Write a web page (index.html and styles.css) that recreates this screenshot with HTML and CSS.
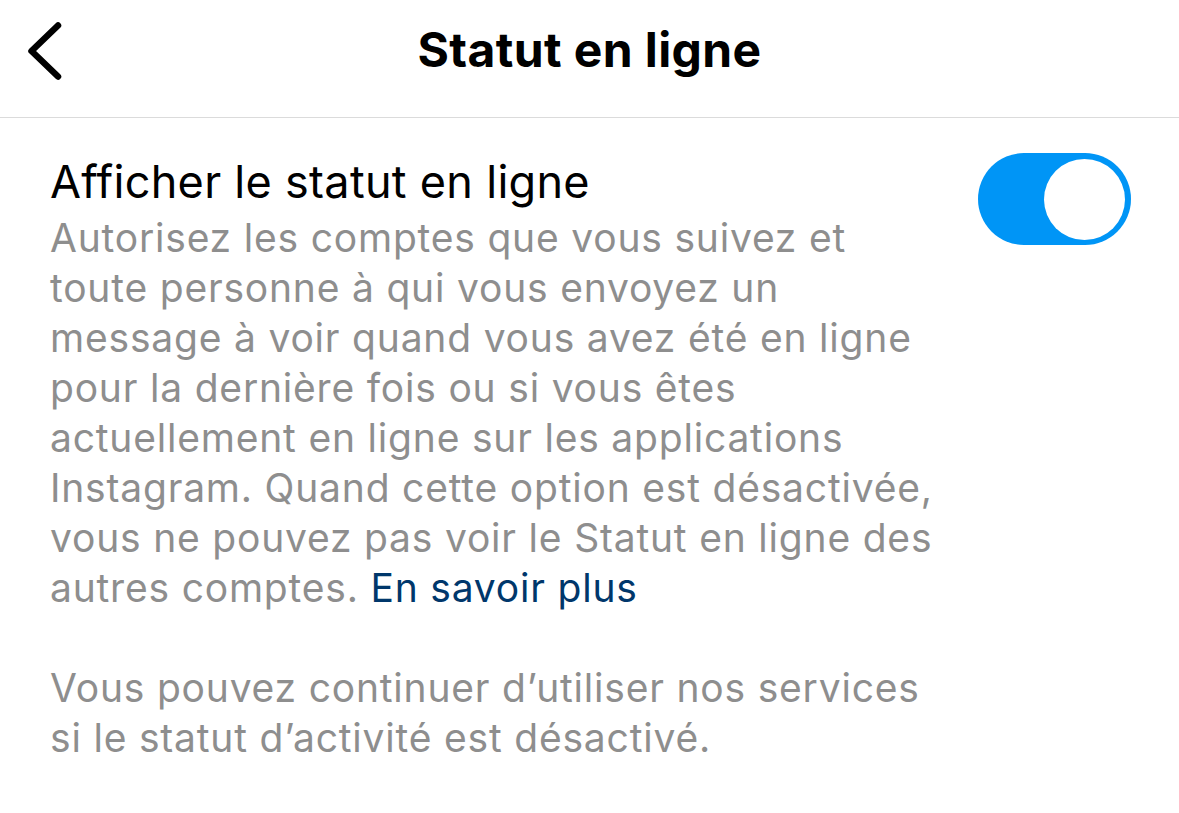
FILE: index.html
```html
<!DOCTYPE html>
<html lang="fr">
  <head>
    <meta charset="UTF-8" />
    <meta name="viewport" content="width=device-width, initial-scale=1.0" />
    <title>Statut en ligne</title>
    <link rel="stylesheet" href="styles.css">
  </head>
  <body>
    <header class="topbar">
      <button class="back" aria-label="Retour">
        <svg width="44" height="64" viewBox="0 0 44 64">
          <path d="M34 5.5 L7.5 31 L34 56.5" fill="none" stroke="#000" stroke-width="6.5" stroke-linecap="round" stroke-linejoin="round" />
        </svg>
      </button>
      <h1 class="title">Statut en ligne</h1>
    </header>

    <main class="content">
      <div class="setting">
        <div class="setting-text">
          <div class="setting-label">Afficher le statut en ligne</div>
          <p class="desc">
            Autorisez les comptes que vous suivez et<br>
            toute personne à qui vous envoyez un<br>
            message à voir quand vous avez été en ligne<br>
            pour la dernière fois ou si vous êtes<br>
            actuellement en ligne sur les applications<br>
            Instagram. Quand cette option est désactivée,<br>
            vous ne pouvez pas voir le Statut en ligne des<br>
            autres comptes. <a href="#" class="more">En savoir plus</a>
          </p>
        </div>
        <div class="toggle on"><span class="knob"></span></div>
      </div>

      <p class="desc note">
        Vous pouvez continuer d’utiliser nos services<br>
        si le statut d’activité est désactivé.
      </p>
    </main>
  </body>
</html>
```

FILE: styles.css
```css
body {
  margin: 0;
  padding: 0;
  background-color: #fff;
  font-family: "Inter", "Roboto", sans-serif;
  color: #000;
}

.topbar {
  height: 97px;
  padding-top: 20px;
  border-bottom: 1px solid #dbdbdb;
  display: flex;
  justify-content: center;
  align-items: flex-start;
  position: relative;
}

.back {
  position: absolute;
  left: 24px;
  top: 20px;
  background: none;
  border: none;
  padding: 0;
  cursor: pointer;
}

.back svg {
  display: block;
}

.title {
  margin: 0;
  font-size: 48px;
  line-height: 60px;
  font-weight: 700;
  letter-spacing: 0.4px;
}

.content {
  padding: 39px 48px 0 50px;
}

.setting {
  display: flex;
  justify-content: space-between;
  align-items: flex-start;
}

.setting-label {
  font-size: 45px;
  line-height: 50px;
  letter-spacing: 0.3px;
  margin-bottom: 6px;
}

.desc {
  margin: 0;
  font-size: 39px;
  line-height: 50px;
  letter-spacing: 0.8px;
  color: #8e8e8e;
}

.more {
  color: #00376b;
  text-decoration: none;
}

.note {
  margin-top: 50px;
}

.toggle {
  width: 153px;
  height: 92px;
  border-radius: 46px;
  background-color: #0095f6;
  margin-top: -4px;
  display: flex;
  align-items: center;
  justify-content: flex-end;
  padding: 0 6px;
  box-sizing: border-box;
}

.knob {
  width: 81px;
  height: 81px;
  border-radius: 50%;
  background-color: #fff;
}
```
